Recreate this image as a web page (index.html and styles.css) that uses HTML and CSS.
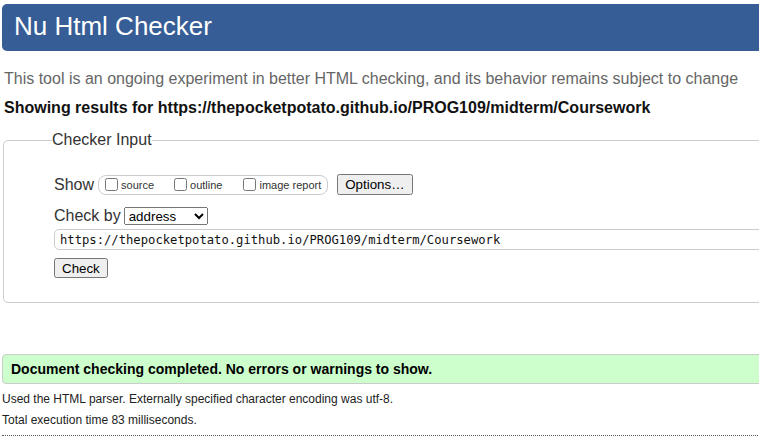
FILE: index.html
```html
<!DOCTYPE html>
<html lang="en">
<head>
<meta charset="utf-8">
<title>Nu Html Checker</title>
<link rel="stylesheet" href="styles.css">
</head>
<body>
<div class="page">
  <header class="masthead"><h1>Nu Html Checker</h1></header>
  <p class="lede">This tool is an ongoing experiment in better HTML checking, and its behavior remains subject to change</p>
  <p class="results-for">Showing results for https://thepocketpotato.github.io/PROG109/midterm/Coursework</p>
  <form class="checker-form">
    <fieldset class="checker">
      <legend>Checker Input</legend>
      <div class="row show-row">
        <span class="row-label">Show</span>
        <fieldset class="opts">
          <label class="opt opt-source"><input type="checkbox"><span>source</span></label>
          <label class="opt opt-outline"><input type="checkbox"><span>outline</span></label>
          <label class="opt"><input type="checkbox"><span>image report</span></label>
        </fieldset>
        <button type="button" class="btn">Options…</button>
      </div>
      <div class="row checkby-row">
        <label class="row-label">Check by</label>
        <select class="select"><option>address</option></select>
      </div>
      <div class="row url-row">
        <input class="url" type="url" value="https://thepocketpotato.github.io/PROG109/midterm/Coursework">
      </div>
      <div class="row submit-row">
        <button type="button" class="btn">Check</button>
      </div>
    </fieldset>
  </form>
  <div class="success"><p>Document checking completed. No errors or warnings to show.</p></div>
  <p class="details">Used the HTML parser. Externally specified character encoding was utf-8.</p>
  <p class="details">Total execution time 83 milliseconds.</p>
  <hr class="rule">
</div>
</body>
</html>
```
FILE: styles.css
```css
html, body {
  margin: 0;
  padding: 0;
  overflow: hidden;
  background: #fff;
}
body {
  font-family: "Liberation Sans", Arial, sans-serif;
  color: #222;
}
.page {
  width: 820px;
  padding-left: 2px;
}
.masthead {
  margin-top: 4px;
  height: 47px;
  background: #365d95;
  border-radius: 5px;
}
.masthead h1 {
  margin: 0;
  padding: 0 0 0 12px;
  font-size: 26px;
  font-weight: normal;
  line-height: 44px;
  color: #fff;
}
.lede {
  margin: 19px 0 0 2px;
  font-size: 16px;
  color: #666;
}
.results-for {
  margin: 11px 0 0 2px;
  font-size: 16px;
  font-weight: bold;
  color: #111;
}
.checker-form {
  margin: 14px 0 0 1px;
}
.checker {
  margin: 0;
  padding: 25px 0 24px 50px;
  border: 1px solid #ccc;
  border-radius: 5px;
  display: flex;
  flex-direction: column;
}
.checker legend {
  margin-left: -2px;
  padding: 0;
  font-size: 16px;
  color: #333;
}
.row {
  display: flex;
  align-items: center;
}
.row-label {
  font-size: 16px;
  color: #333;
}
.opts {
  display: flex;
  align-items: center;
  margin: 0 0 0 4px;
  padding: 0 6px 0 6px;
  height: 18px;
  border: 1px solid #ccc;
  border-radius: 8px;
}
.opt {
  display: flex;
  align-items: center;
  font-size: 11px;
  color: #333;
}
.opt input {
  margin: 0 3px 0 0;
  width: 13px;
  height: 13px;
}
.opt-source { margin-right: 20px; }
.opt-outline { margin-right: 21px; }
.btn {
  font-family: "Liberation Sans", Arial, sans-serif;
  font-size: 13.33px;
  color: #000;
  padding: 1px 6px;
  height: 21px;
}
.show-row .btn {
  margin-left: 9px;
}
.checkby-row {
  margin-top: 12px;
}
.select {
  margin-left: 3px;
  font-family: "Liberation Sans", Arial, sans-serif;
  font-size: 13.33px;
  width: 84px;
  height: 18px;
}
.url-row {
  margin-top: 4px;
}
.url {
  width: 760px;
  height: 21px;
  box-sizing: border-box;
  padding: 0 5px;
  border: 1px solid #ccc;
  border-radius: 5px;
  font-family: "DejaVu Sans Mono", "Liberation Mono", monospace;
  font-size: 12.2px;
  color: #111;
}
.submit-row {
  margin-top: 8px;
}
.submit-row .btn {
  height: 20px;
}
.success {
  margin-top: 51px;
  background: #ccffcc;
  border: 1px solid #ccc;
  border-radius: 4px;
}
.success p {
  margin: 0;
  padding: 0 0 0 8px;
  font-size: 14px;
  font-weight: bold;
  line-height: 28px;
  color: #000;
}
.details {
  margin: 8px 0 0 0;
  font-size: 12px;
  line-height: 15px;
  color: #222;
}
.details + .details {
  margin-top: 6px;
}
.rule {
  margin: 7px 0 0 0;
  border: 0;
  border-top: 1px dotted #555;
  height: 0;
}
```
